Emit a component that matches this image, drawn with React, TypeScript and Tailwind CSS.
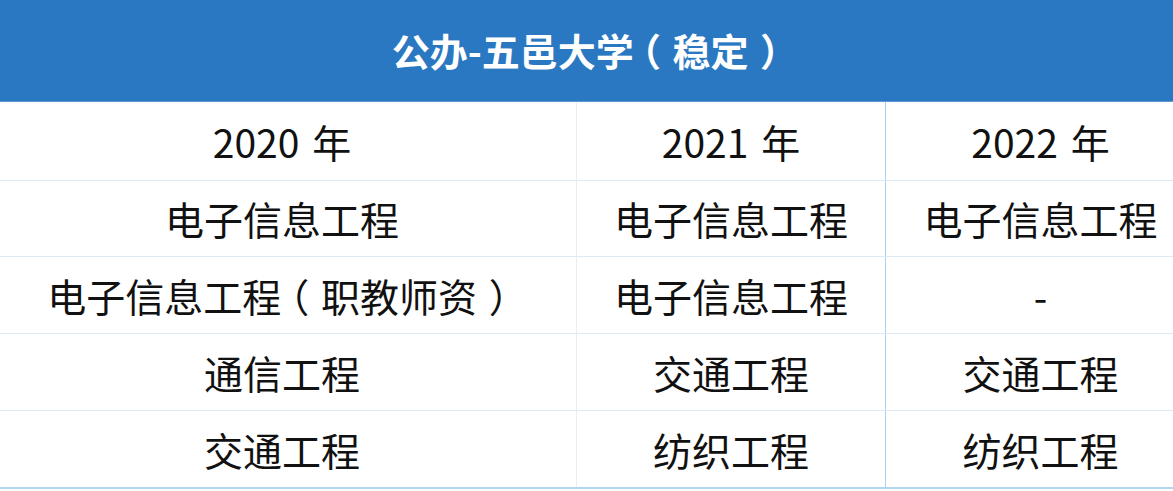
const rows: string[][] = [
  ["2020 年", "2021 年", "2022 年"],
  ["电子信息工程", "电子信息工程", "电子信息工程"],
  ["电子信息工程（职教师资）", "电子信息工程", "-"],
  ["通信工程", "交通工程", "交通工程"],
  ["交通工程", "纺织工程", "纺织工程"],
]

const heights = ["h-[79px]", "h-[76px]", "h-[77px]", "h-[77px]", "h-[76px]"]

// the picture's font centres full-width parens in their cell:
// use the half-width glyph and put the rest of the cell back as margin
function Text({ value }: { value: string }) {
  const parts = value.split(/([（）])/)
  return (
    <>
      {parts.map((p, i) =>
        p === "（" ? (
          <span key={i} className="ml-[0.22em] mr-[0.3em]" style={{ fontFeatureSettings: '"halt"' }}>
            {p}
          </span>
        ) : p === "）" ? (
          <span key={i} className="ml-[0.3em] mr-[0.22em]" style={{ fontFeatureSettings: '"halt"' }}>
            {p}
          </span>
        ) : (
          <span key={i}>{p}</span>
        )
      )}
    </>
  )
}

export default function App() {
  return (
    <div
      className="w-[1173px] h-[491px] bg-white text-[#111] overflow-hidden"
      style={{ fontFamily: '"Noto Sans CJK SC", "Noto Sans", sans-serif' }}
    >
      <div className="h-[102px] bg-[#2b78c2] border-b border-[#5a9ad6] flex items-center justify-center pb-[2px]">
        <h1 className="text-white font-bold text-[38px] leading-none pl-[6px]">
          <Text value="公办-五邑大学（稳定）" />
        </h1>
      </div>
      <div className="border-b-2 border-[#b3d7f2]">
        {rows.map((row, i) => (
          <div
            key={i}
            className={`grid grid-cols-[577px_309px_1fr] ${heights[i]} ${i < rows.length - 1 ? "border-b border-[#dde9f5]" : ""}`}
          >
            {row.map((cell, j) => (
              <div
                key={j}
                className={`flex items-center justify-center leading-none whitespace-nowrap ${
                  i === 0 ? "text-[39px] [word-spacing:4px]" : "text-[39px]"
                } ${
                  j === 0
                    ? "border-r border-[#e3eef8] pr-[12px]"
                    : j === 1
                      ? "border-r border-[#a9d0ee]"
                      : "pl-[22px]"
                }`}
              >
                <Text value={cell} />
              </div>
            ))}
          </div>
        ))}
      </div>
    </div>
  )
}
